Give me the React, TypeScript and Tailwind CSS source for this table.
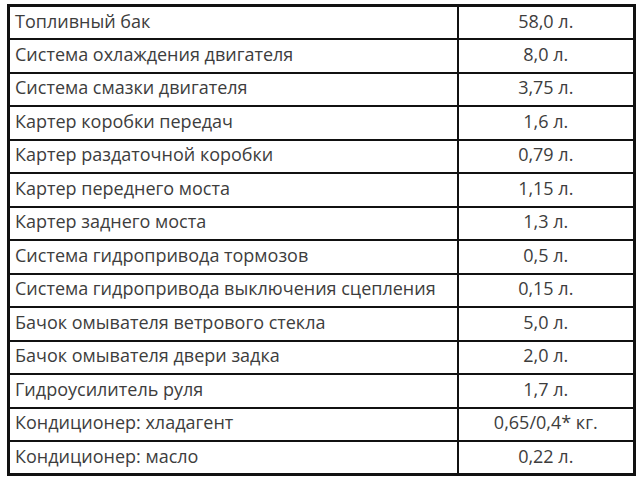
const rows: [string, string][] = [
  ["Топливный бак", "58,0 л."],
  ["Система охлаждения двигателя", "8,0 л."],
  ["Система смазки двигателя", "3,75 л."],
  ["Картер коробки передач", "1,6 л."],
  ["Картер раздаточной коробки", "0,79 л."],
  ["Картер переднего моста", "1,15 л."],
  ["Картер заднего моста", "1,3 л."],
  ["Система гидропривода тормозов", "0,5 л."],
  ["Система гидропривода выключения сцепления", "0,15 л."],
  ["Бачок омывателя ветрового стекла", "5,0 л."],
  ["Бачок омывателя двери задка", "2,0 л."],
  ["Гидроусилитель руля", "1,7 л."],
  ["Кондиционер: хладагент", "0,65/0,4* кг."],
  ["Кондиционер: масло", "0,22 л."],
];

export default function App() {
  return (
    <div className="w-[644px] h-[482px] bg-white pt-[4px] pl-[7px]">
      <table
        className="w-[629px] border-collapse border-[3px] border-[#111] text-[#3d3d3d] text-[18px] leading-none"
        style={{ fontFamily: '"Open Sans", "DejaVu Sans", sans-serif' }}
      >
        <tbody>
          {rows.map(([name, value]) => (
            <tr key={name} className="h-[33.5px]">
              <td className="border-[2px] border-[#111] pl-[5px] pb-[4px] w-[449px] align-middle">
                {name}
              </td>
              <td className="border-[2px] border-[#111] text-center pb-[4px] align-middle">
                {value}
              </td>
            </tr>
          ))}
        </tbody>
      </table>
    </div>
  );
}
